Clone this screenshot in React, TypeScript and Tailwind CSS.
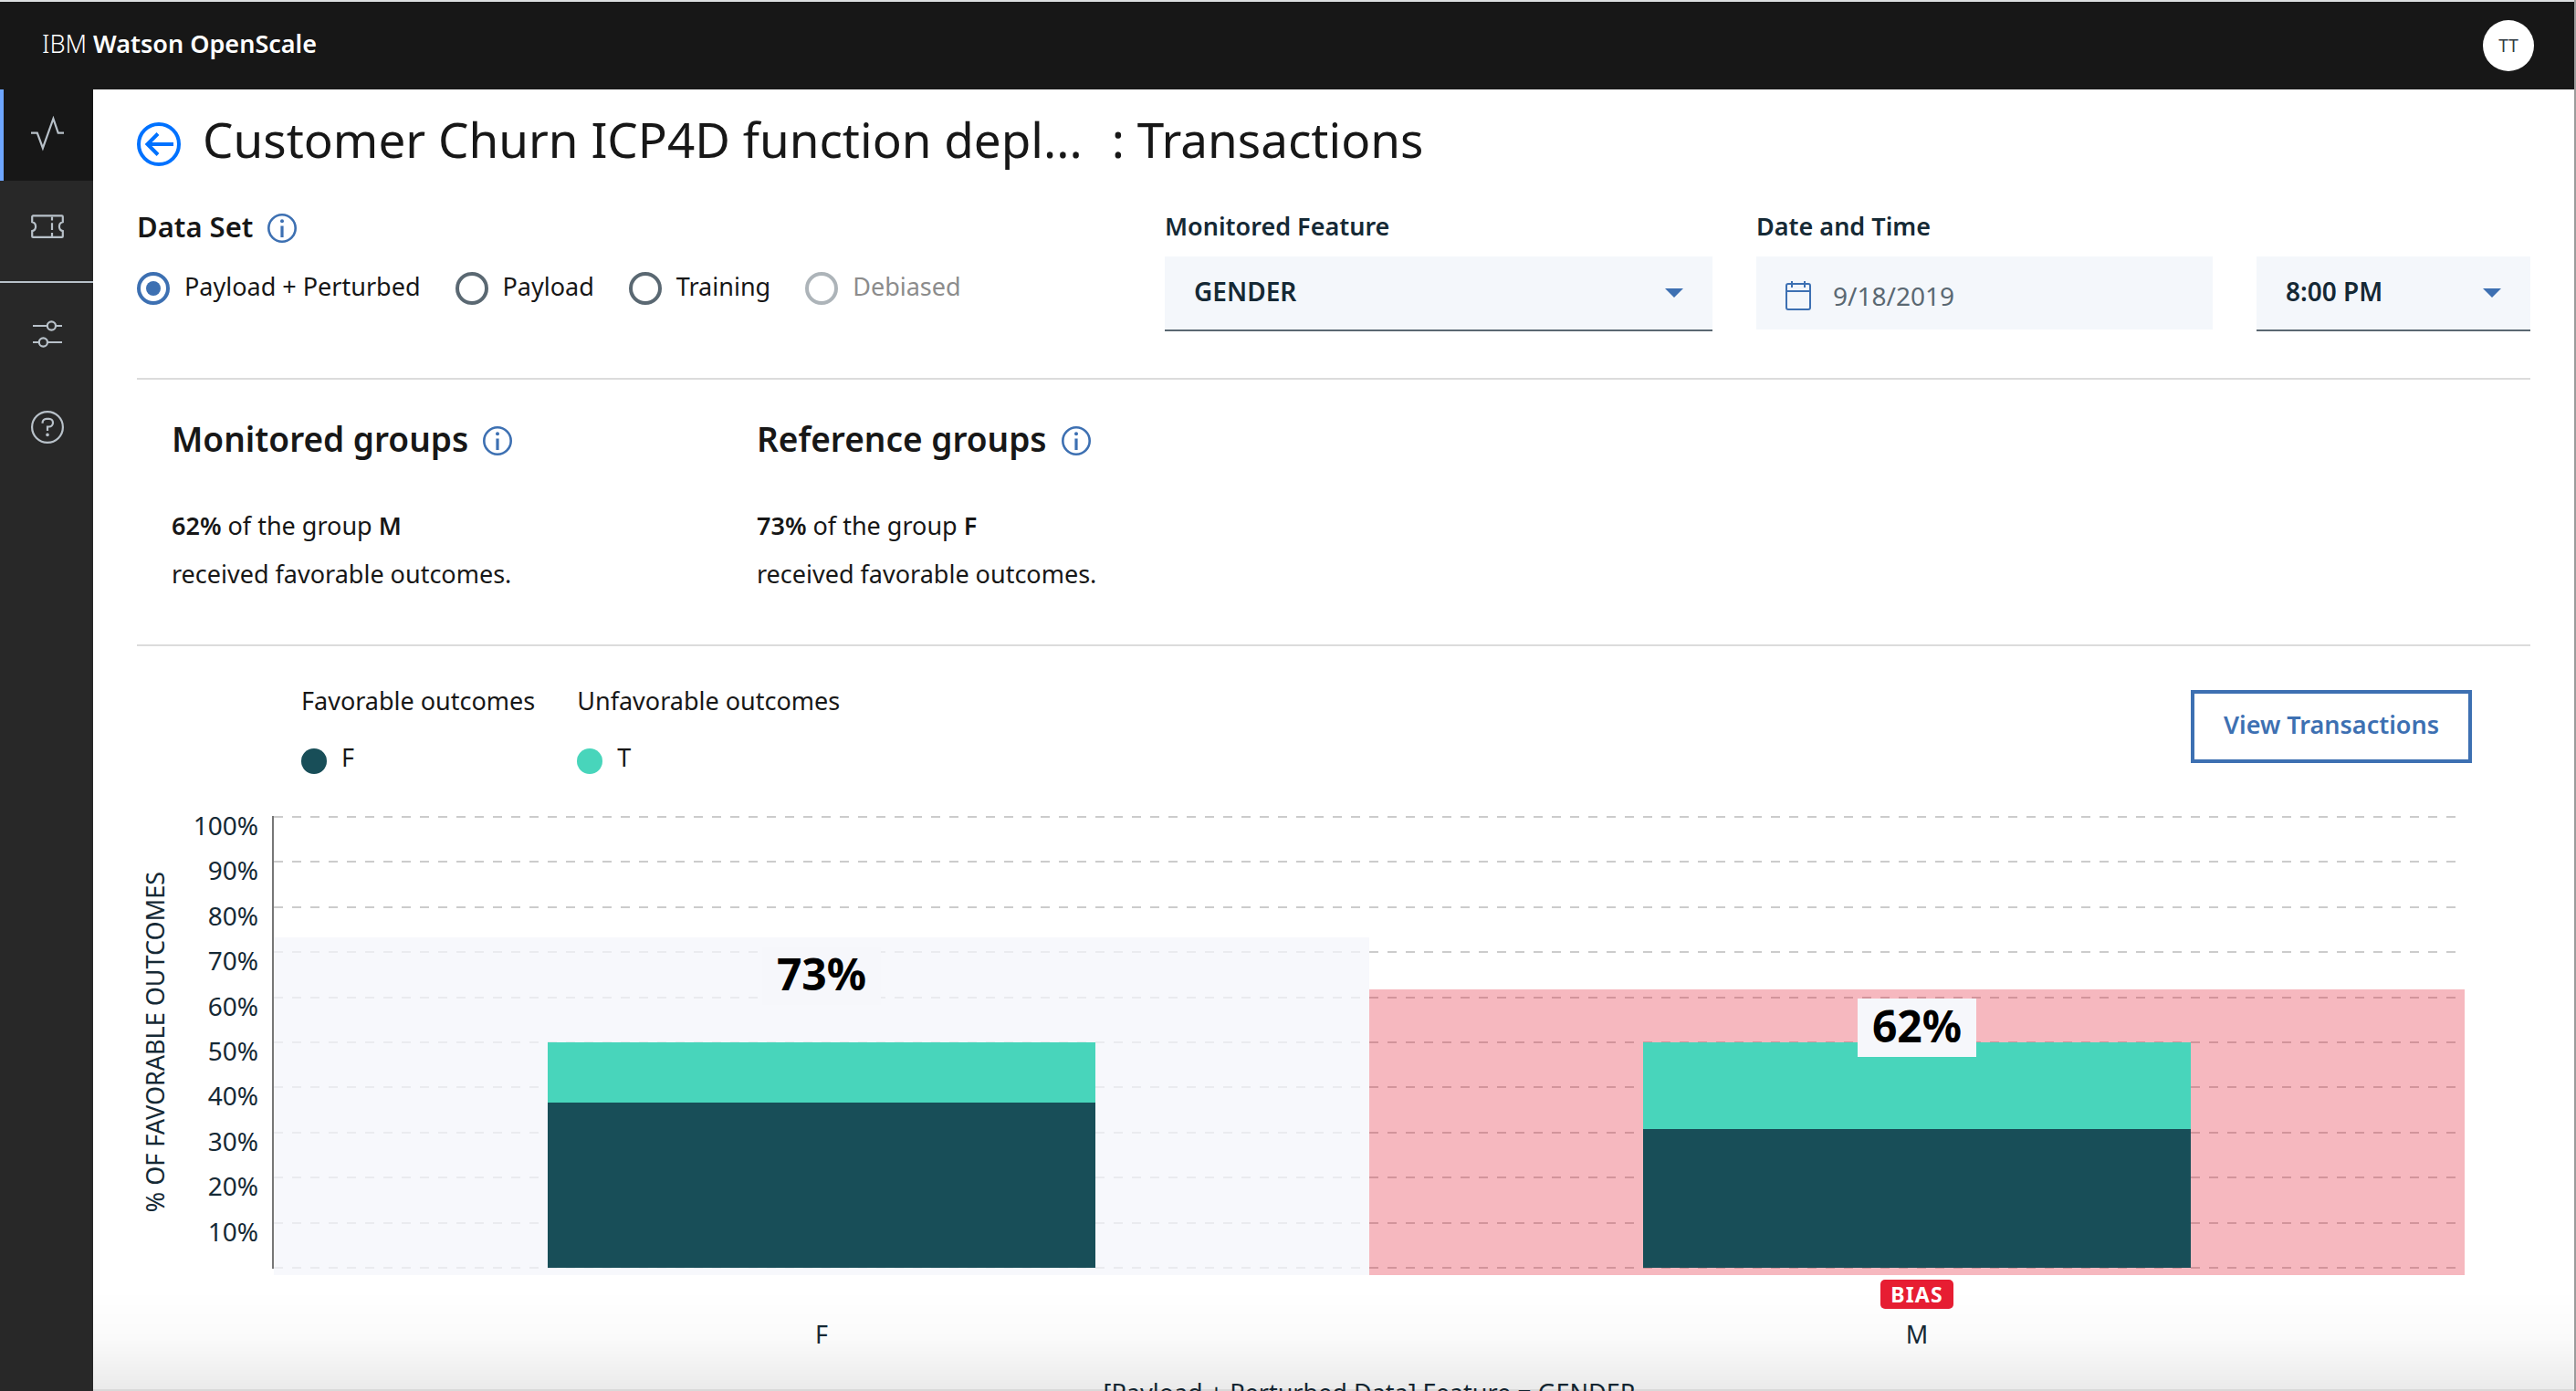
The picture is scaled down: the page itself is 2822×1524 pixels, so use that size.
import { useState } from "react";
import type { ReactNode } from "react";

type Group = {
  name: string;
  rate: number;
  label: string;
  biased: boolean;
};

const groups: Group[] = [
  { name: "F", rate: 73.2, label: "73%", biased: false },
  { name: "M", rate: 61.7, label: "62%", biased: true },
];

const ticks = ["100%", "90%", "80%", "70%", "60%", "50%", "40%", "30%", "20%", "10%"];

const dataSets = [
  { name: "Payload + Perturbed", disabled: false },
  { name: "Payload", disabled: false },
  { name: "Training", disabled: false },
  { name: "Debiased", disabled: true },
];

function InfoButton({ label }: { label: string }) {
  return (
    <button type="button" aria-label={label} className="mt-1 size-8 shrink-0 text-[#3d70b2]">
      <svg viewBox="0 0 32 32" className="size-8" fill="none" aria-hidden="true">
        <circle cx="16" cy="16" r="14.7" stroke="currentColor" strokeWidth="2.6" />
        <circle cx="16" cy="8.2" r="2" fill="currentColor" />
        <path d="M16 13.5V26" stroke="currentColor" strokeWidth="3.2" />
      </svg>
    </button>
  );
}

function NavItem({ label, active = false, children }: { label: string; active?: boolean; children: ReactNode }) {
  return (
    <a
      href="#"
      aria-label={label}
      className={
        active
          ? "flex h-[100px] items-center justify-center border-l-4 border-[#6ea6ff] bg-[#171717] pr-0.5 pb-1"
          : "flex h-[100px] items-center justify-center pb-1 pl-0.5"
      }
    >
      <svg viewBox="0 0 36 36" className="size-9 overflow-visible text-[#b8c1c9]" fill="none" stroke="currentColor" strokeWidth="2.2" aria-hidden="true">
        {children}
      </svg>
    </a>
  );
}

function Caret() {
  return (
    <svg viewBox="0 0 20 10" className="pointer-events-none absolute top-[35px] right-8 h-[10px] w-5" aria-hidden="true">
      <path d="M0 0h20L10 10z" fill="#3d70b2" />
    </svg>
  );
}

function GroupSummary({ title, percent, name }: { title: string; percent: string; name: string }) {
  return (
    <section className="w-[641px]">
      <div className="flex items-center gap-4">
        <h2 className="text-[37px] leading-[46px] font-semibold">{title}</h2>
        <InfoButton label={"About " + title.toLowerCase()} />
      </div>
      <p className="mt-[45px] text-[27px] leading-[53px]">
        <strong className="font-semibold">{percent}</strong> of the group <strong className="font-semibold">{name}</strong>
        <br />
        received favorable outcomes.
      </p>
    </section>
  );
}

function LegendEntry({ title, name, dot }: { title: string; name: string; dot: string }) {
  return (
    <div>
      <div className="leading-9">{title}</div>
      <div className="mt-[26px] flex h-9 items-end gap-4">
        <span className={"size-7 rounded-full " + dot} />
        <span className="self-start leading-9">{name}</span>
      </div>
    </div>
  );
}

function Chart() {
  return (
    <div className="mt-[46px] flex pr-[72px] text-[#152935]">
      <div className="flex h-[496px] w-[40px] items-center justify-center">
        <span className="rotate-180 leading-10 whitespace-nowrap [writing-mode:vertical-rl]">% OF FAVORABLE OUTCOMES</span>
      </div>
      <div className="flex h-[496px] w-[110px] flex-col pr-[17px] text-right text-[28px]">
        {ticks.map((tick) => (
          <span key={tick} className="flex-1 leading-5">
            {tick}
          </span>
        ))}
        <span className="h-0.5" />
      </div>
      <div className="flex-1">
        <div className="grid h-[503px]">
          <div className="col-start-1 row-start-1 -ml-0.5 flex h-[496px] flex-col justify-between border-l-2 border-[#777] pr-[10px]">
            {[...ticks, "0%"].map((tick) => (
              <span key={tick} className="h-0.5 bg-[repeating-linear-gradient(90deg,#ccc_0_10px,transparent_10px_20px)]" />
            ))}
          </div>
          <div className="col-start-1 row-start-1 flex h-full">
            {groups.map((group) => (
              <div key={group.name} className="grid h-full flex-1 items-end">
                <div
                  className={
                    group.biased
                      ? "col-start-1 row-start-1 bg-[rgba(224,20,42,0.3)]"
                      : "col-start-1 row-start-1 bg-[rgba(244,246,251,0.75)]"
                  }
                  style={{ height: `calc((100% - 9px) * ${group.rate / 100} + 8px)` }}
                />
                <div className="col-start-1 row-start-1 flex h-[255px] w-1/2 flex-col justify-self-center pb-2">
                  <div className="bg-[#48d5bb]" style={{ flexGrow: 100 - group.rate }} />
                  <div className="bg-[#184e58]" style={{ flexGrow: group.rate }} />
                </div>
                <div
                  className="col-start-1 row-start-1 flex items-start justify-center pt-[10px]"
                  style={{ height: `calc((100% - 9px) * ${group.rate / 100} + 8px)` }}
                >
                  <span className="h-16 w-[130px] bg-[#f6f7fb] text-center text-[48px] leading-[60px] font-bold text-black">{group.label}</span>
                </div>
              </div>
            ))}
          </div>
        </div>
        <div className="flex">
          {groups.map((group) => (
            <div key={group.name} className="flex flex-1 flex-col items-center">
              <div className="h-[47px] pt-[5px]">
                {group.biased && (
                  <span className="block w-20 rounded-[5px] bg-[#e71d32] text-center text-[23px] leading-8 font-bold tracking-wider text-white">BIAS</span>
                )}
              </div>
              <span className="leading-9">{group.name}</span>
            </div>
          ))}
        </div>
        <div className="mt-7 text-center leading-9 whitespace-nowrap">[Payload + Perturbed Data] Feature = GENDER</div>
      </div>
    </div>
  );
}

export default function App() {
  const [dataSet, setDataSet] = useState("Payload + Perturbed");
  return (
    <div className="relative flex h-screen flex-col overflow-hidden border-r-2 border-[#9b9b9b] bg-white font-['Noto_Sans',sans-serif] text-[27px] text-[#171717]">
      <header className="flex h-[98px] shrink-0 items-center justify-between border-t-2 border-[#dcdfe0] bg-[#171717] pr-11 pl-[46px] text-white">
        <div className="pb-1">
          <span className="font-light">IBM</span> <span className="font-semibold">Watson OpenScale</span>
        </div>
        <button type="button" aria-label="User profile" className="size-14 rounded-full bg-white text-[19px] text-[#323b42]">
          TT
        </button>
      </header>

      <div className="flex min-h-0 flex-1">
        <nav aria-label="Main" className="flex w-[102px] shrink-0 flex-col gap-0.5 bg-[#282828]">
          <NavItem label="Insights" active>
            <path d="M0 17.7h6.8L12.900 34.200 24.400 2l5.300 15.700H36" />
          </NavItem>
          <NavItem label="Tickets">
            <path d="M2.200 6.400h31.600a1 1 0 0 1 1 1v5.800a5.100 5.100 0 0 0 0 9.900v5.800a1 1 0 0 1-1 1H2.200a1 1 0 0 1-1-1v-5.800a5.100 5.100 0 0 0 0-9.900V7.400a1 1 0 0 1 1-1z" />
            <path d="M23 7.500v4M23 14.300v7.700M23 25v4.500" />
          </NavItem>
          <div className="my-1.5 h-0.5 shrink-0 bg-[#b8c1c9]" />
          <NavItem label="Configure">
            <circle cx="22.4" cy="9" r="4.6" />
            <circle cx="13.4" cy="27" r="4.6" />
            <path d="M2 9h15.800M27 9h7M2 27h6.800M18 27h16" />
          </NavItem>
          <NavItem label="Help">
            <circle cx="18" cy="18" r="16.9" />
            <path d="M12.600 13.800v-.8A4.200 4.200 0 0 1 16.800 8.800h3A4.200 4.200 0 0 1 24 13v.3a4.200 4.200 0 0 1-4.200 4.200H18v4.500" />
            <circle cx="18" cy="26.4" r="1.800" fill="currentColor" stroke="none" />
          </NavItem>
        </nav>

        <main className="min-w-0 flex-1 overflow-hidden px-12">
          <div className="flex items-start gap-6 pt-9">
            <button type="button" aria-label="Back" className="size-12 shrink-0">
              <svg viewBox="0 0 48 48" className="size-12" fill="none" stroke="#0072ff" strokeWidth="4" aria-hidden="true">
                <circle cx="24" cy="24" r="22" />
                <path d="M40 24H11M23 12.5 11.5 24 23 35.5" />
              </svg>
            </button>
            <h1 className="flex gap-8 text-[53px] leading-[38px] whitespace-nowrap">
              <span>Customer Churn ICP4D function depl...</span>
              <span>: Transactions</span>
            </h1>
          </div>

          <form className="mt-12 flex items-start gap-12 border-b-2 border-[#dcdcdc] pb-[51px]">
            <div role="radiogroup" aria-labelledby="data-set" className="mr-auto">
              <div className="flex h-9 items-center gap-4">
                <h2 id="data-set" className="text-[31px] leading-9 font-semibold">
                  Data Set
                </h2>
                <InfoButton label="About data sets" />
              </div>
              <div className="mt-8 flex gap-[38px]">
                {dataSets.map((set) => (
                  <label key={set.name} className="flex h-9 items-center gap-4">
                    <input
                      type="radio"
                      name="data-set"
                      disabled={set.disabled}
                      checked={dataSet === set.name}
                      onChange={() => setDataSet(set.name)}
                      className="grid size-9 appearance-none place-content-center rounded-full border-4 border-[#5a6872] before:size-4 before:rounded-full checked:border-[#3d70b2] checked:before:bg-[#3d70b2] disabled:border-[#adb4b9]"
                    />
                    <span className={set.disabled ? "pb-1 text-[#8c8c8c]" : "pb-1"}>{set.name}</span>
                  </label>
                ))}
              </div>
            </div>

            <div className="w-[600px] text-[#152935]">
              <label htmlFor="feature" className="block leading-9 font-semibold">
                Monitored Feature
              </label>
              <div className="relative mt-[15px]">
                <select id="feature" className="block h-[82px] w-full appearance-none border-b-2 border-[#5a6872] bg-[#f4f7fb] pr-16 pb-1 pl-8 text-[28px] font-semibold">
                  <option>GENDER</option>
                </select>
                <Caret />
              </div>
            </div>

            <div className="w-[500px] text-[#152935]">
              <label htmlFor="date" className="block leading-9 font-semibold">
                Date and Time
              </label>
              <div className="mt-[15px] flex h-20 items-center gap-6 bg-[#f4f7fb] pt-1.5 pl-8">
                <svg viewBox="0 0 28 32" className="h-8 w-7 shrink-0" fill="none" stroke="#3d70b2" strokeWidth="2" aria-hidden="true">
                  <rect x="1" y="3" width="26" height="28" rx="2" />
                  <path d="M1 11h26M7 0v7M21 0v7" />
                </svg>
                <input id="date" type="text" defaultValue="9/18/2019" className="w-full min-w-0 bg-transparent text-[28px] text-[#5a6872]" />
              </div>
            </div>

            <div className="relative mt-[51px] w-[300px] text-[#152935]">
              <select aria-label="Time" className="block h-[82px] w-full appearance-none border-b-2 border-[#5a6872] bg-[#f4f7fb] pr-16 pb-1 pl-8 text-[28px] font-semibold">
                <option>8:00 PM</option>
              </select>
              <Caret />
            </div>
          </form>

          <div className="flex border-b-2 border-[#dcdcdc] pt-[42px] pb-[51px] pl-[38px]">
            <GroupSummary title="Monitored groups" percent="62%" name="M" />
            <GroupSummary title="Reference groups" percent="73%" name="F" />
          </div>

          <div className="flex items-start gap-[46px] pt-[42px] pr-16 pl-[180px]">
            <LegendEntry title="Favorable outcomes" name="F" dot="bg-[#184e58]" />
            <LegendEntry title="Unfavorable outcomes" name="T" dot="bg-[#48d5bb]" />
            <button type="button" className="mt-1.5 ml-auto h-20 border-4 border-[#3d70b2] px-8 pb-1 font-semibold text-[#3d70b2]">
              View Transactions
            </button>
          </div>

          <Chart />
        </main>
      </div>

      <div className="pointer-events-none absolute right-0 bottom-0 left-[102px] h-[110px] border-b-2 border-black/15 bg-linear-to-b from-transparent via-black/2 to-black/8" />
    </div>
  );
}
